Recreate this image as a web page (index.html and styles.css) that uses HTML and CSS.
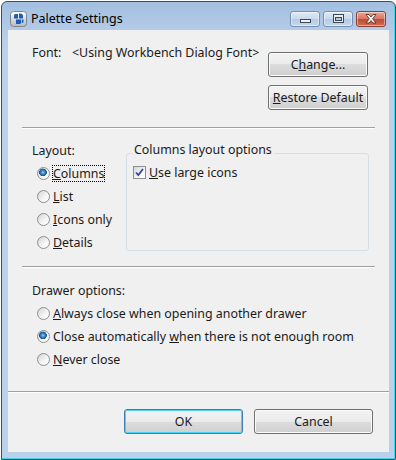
FILE: index.html
```html
<!DOCTYPE html>
<html lang="en">
<head>
    <meta charset="UTF-8">
    <title>Palette Settings</title>
    <link rel="stylesheet" href="styles.css">
</head>
<body>
    <div class="window">
        <div class="titlebar">
            <svg class="app-icon" width="17" height="16" viewBox="0 0 17 16">
                <defs>
                    <linearGradient id="iconBg" x1="0" y1="0" x2="0" y2="1">
                        <stop offset="0" stop-color="#ffffff"/>
                        <stop offset="1" stop-color="#b4b9c0"/>
                    </linearGradient>
                </defs>
                <rect x="0.5" y="0.5" width="16" height="15" rx="3" fill="url(#iconBg)" stroke="#7d848e"/>
                <path d="M4 4.5 Q4 3 5.5 3 H8 V7.5 H4 Z" fill="#1d5bb5"/>
                <path d="M9 2.5 Q13 2 13 5 V7.5 H9 Z" fill="#1d5bb5"/>
                <path d="M6 8.5 H11 V11.5 Q11 13 9.5 13 H6 Z" fill="#1d5bb5"/>
                <path d="M11.8 8.5 H13.5 V10.5 Q13.5 12 12 12 H11.8 Z" fill="#1d5bb5"/>
            </svg>
            <span class="title">Palette Settings</span>
            <div class="caption-buttons">
                <span class="cap-btn">
                    <svg width="28" height="14" viewBox="0 0 28 14"><rect x="9.5" y="7.5" width="10" height="3" fill="#f2f2f2" stroke="#3d4653"/></svg>
                </span>
                <span class="cap-btn">
                    <svg width="28" height="14" viewBox="0 0 28 14"><rect x="9.5" y="2.5" width="10" height="8" fill="#e8edf3" stroke="#3d4653"/><rect x="11.5" y="5.5" width="6" height="3" fill="#b9c8da" stroke="#3d4653"/></svg>
                </span>
                <span class="cap-btn close">
                    <svg width="28" height="14" viewBox="0 0 28 14"><path d="M9 2.5 H12 L14 5 L16 2.5 H19 L15.6 6.8 L19 11 H16 L14 8.6 L12 11 H9 L12.4 6.8 Z" fill="#ffffff" stroke="#5b2b22" stroke-width="0.9"/></svg>
                </span>
            </div>
        </div>

        <div class="client">
            <div class="font-section">
                <div class="font-info">
                    <span class="font-label">Font:</span>
                    <span>&lt;Using Workbench Dialog Font&gt;</span>
                </div>
                <div class="font-buttons">
                    <button class="btn">C<u>h</u>ange...</button>
                    <button class="btn"><u>R</u>estore Default</button>
                </div>
            </div>

            <div class="separator inset"></div>

            <div class="layout-section">
                <div class="layout-left">
                    <div class="section-label">Layout:</div>
                    <div class="option-row"><span class="radio checked"></span><span class="caption focused"><u>C</u>olumns</span></div>
                    <div class="option-row"><span class="radio"></span><span class="caption"><u>L</u>ist</span></div>
                    <div class="option-row"><span class="radio"></span><span class="caption"><u>I</u>cons only</span></div>
                    <div class="option-row"><span class="radio"></span><span class="caption"><u>D</u>etails</span></div>
                </div>
                <fieldset class="group">
                    <legend>Columns layout options</legend>
                    <div class="option-row check-row">
                        <span class="checkbox">
                            <svg width="11" height="11" viewBox="0 0 11 11"><path d="M2 5.5 L4.3 8 L9 2" fill="none" stroke="#33479e" stroke-width="1.8"/></svg>
                        </span>
                        <span class="caption"><u>U</u>se large icons</span>
                    </div>
                </fieldset>
            </div>

            <div class="separator inset"></div>

            <div class="drawer-section">
                <div class="section-label">Drawer options:</div>
                <div class="option-row"><span class="radio"></span><span class="caption"><u>A</u>lways close when opening another drawer</span></div>
                <div class="option-row"><span class="radio checked"></span><span class="caption">Close automatically <u>w</u>hen there is not enough room</span></div>
                <div class="option-row"><span class="radio"></span><span class="caption"><u>N</u>ever close</span></div>
            </div>

            <div class="separator"></div>

            <div class="button-bar">
                <button class="btn wide default">OK</button>
                <button class="btn wide">Cancel</button>
            </div>
        </div>
    </div>
</body>
</html>
```

FILE: styles.css
```css
body {
    margin: 0;
    background: #ffffff;
    font-family: "Noto Sans", "DejaVu Sans", sans-serif;
    font-size: 12px;
    color: #1a1a1a;
}
.window {
    box-sizing: border-box;
    width: 395px;
    height: 459px;
    margin: 1px 0 0 1px;
    border: 1px solid #3e4f63;
    border-radius: 6px 6px 0 0;
    background: linear-gradient(#a3bfe0, #b4cbe8 28px, #b9d1ea 40px);
    box-shadow: inset 0 -1px 0 #48d3ea, inset -1px 0 0 #48d3ea;
    display: flex;
    flex-direction: column;
}
.titlebar {
    box-sizing: border-box;
    height: 28px;
    padding: 9px 9px 0 8px;
    display: flex;
    align-items: flex-start;
}
.app-icon {
    display: block;
}
.title {
    margin-left: 4px;
    line-height: 15px;
    font-size: 12.5px;
    color: #000;
}
.caption-buttons {
    margin-left: auto;
    display: flex;
    gap: 3px;
}
.cap-btn {
    box-sizing: border-box;
    width: 30px;
    height: 16px;
    border: 1px solid #7890b0;
    border-radius: 3px;
    background: linear-gradient(#dfe9f5, #c9d9ed 50%, #b3c9e4 50%, #c6d9ef);
    box-shadow: inset 0 0 0 1px rgba(255, 255, 255, 0.45);
}
.cap-btn svg {
    display: block;
}
.cap-btn.close {
    border-color: #8b3f33;
    background: linear-gradient(#e9a798, #d8755f 50%, #c14a33 50%, #cf6e52);
}
.client {
    flex: 1;
    margin: 0 6px 7px;
    background: #f0f0f0;
    display: flex;
    flex-direction: column;
    font-size: 12.4px;
}
.font-section {
    box-sizing: border-box;
    height: 97px;
    padding: 16px 21px 0 24px;
    display: flex;
    justify-content: space-between;
    align-items: flex-start;
}
.font-info {
    display: flex;
    line-height: 14px;
}
.font-label {
    width: 40px;
}
.font-buttons {
    margin-top: 6px;
    display: flex;
    flex-direction: column;
    gap: 8px;
}
.btn {
    box-sizing: border-box;
    width: 100px;
    height: 25px;
    padding: 0;
    border: 1px solid #707070;
    border-radius: 3px;
    background: linear-gradient(#f3f3f3, #ebebeb 50%, #dddddd 50%, #cfcfcf);
    box-shadow: inset 0 0 0 1px #fbfbfb;
    font-family: inherit;
    font-size: 12.4px;
    color: #1a1a1a;
}
.btn.wide {
    width: 119px;
}
.btn.default {
    border-color: #3c7fb1;
    box-shadow: inset 0 0 0 1px #4fd2f8;
}
.separator {
    flex: none;
    border-top: 1px solid #a0a0a0;
    border-bottom: 1px solid #ffffff;
}
.separator.inset {
    margin: 0 14px;
}
.layout-section {
    box-sizing: border-box;
    height: 137px;
    padding: 11px 20px 0 24px;
    display: flex;
    align-items: flex-start;
}
.layout-left {
    width: 94px;
    flex: none;
}
.section-label {
    line-height: 22px;
}
.option-row {
    height: 23px;
    padding-left: 5px;
    display: flex;
    align-items: center;
}
.radio {
    box-sizing: border-box;
    width: 13px;
    height: 13px;
    flex: none;
    border: 1px solid #8c8e90;
    border-radius: 50%;
    background: linear-gradient(135deg, #d2d4d6, #f6f6f6 60%, #ffffff);
}
.radio.checked {
    background:
        radial-gradient(circle at 45% 40%, #9fd6fb 0, #3d8fd6 1.6px, #1b4f86 3.6px, transparent 4.1px),
        linear-gradient(135deg, #d2d4d6, #f6f6f6 60%, #ffffff);
}
.caption {
    margin-left: 2px;
    border: 1px dotted transparent;
    line-height: 15px;
    white-space: nowrap;
}
.caption.focused {
    border-color: #000;
}
.group {
    box-sizing: border-box;
    flex: 1;
    height: 108px;
    margin: 3px 0 0 0;
    padding: 0;
    border: 1px solid #d5dfe5;
    border-radius: 3px;
    min-width: 0;
}
.group legend {
    margin-left: 5px;
    padding: 0 2px 6px;
    line-height: 14px;
}
.check-row {
    margin-top: -2px;
    padding-left: 6px;
}
.checkbox {
    box-sizing: border-box;
    width: 13px;
    height: 13px;
    flex: none;
    border: 1px solid #8c8e90;
    background: linear-gradient(135deg, #d2d4d6, #f6f6f6 60%, #ffffff);
}
.checkbox svg {
    display: block;
}
.check-row .caption {
    margin-left: 2px;
}
.drawer-section {
    box-sizing: border-box;
    height: 123px;
    padding: 12px 0 0 24px;
}
.button-bar {
    flex: 1;
    padding: 16px 16px 0;
    display: flex;
    justify-content: flex-end;
    align-items: flex-start;
    gap: 11px;
}
```
